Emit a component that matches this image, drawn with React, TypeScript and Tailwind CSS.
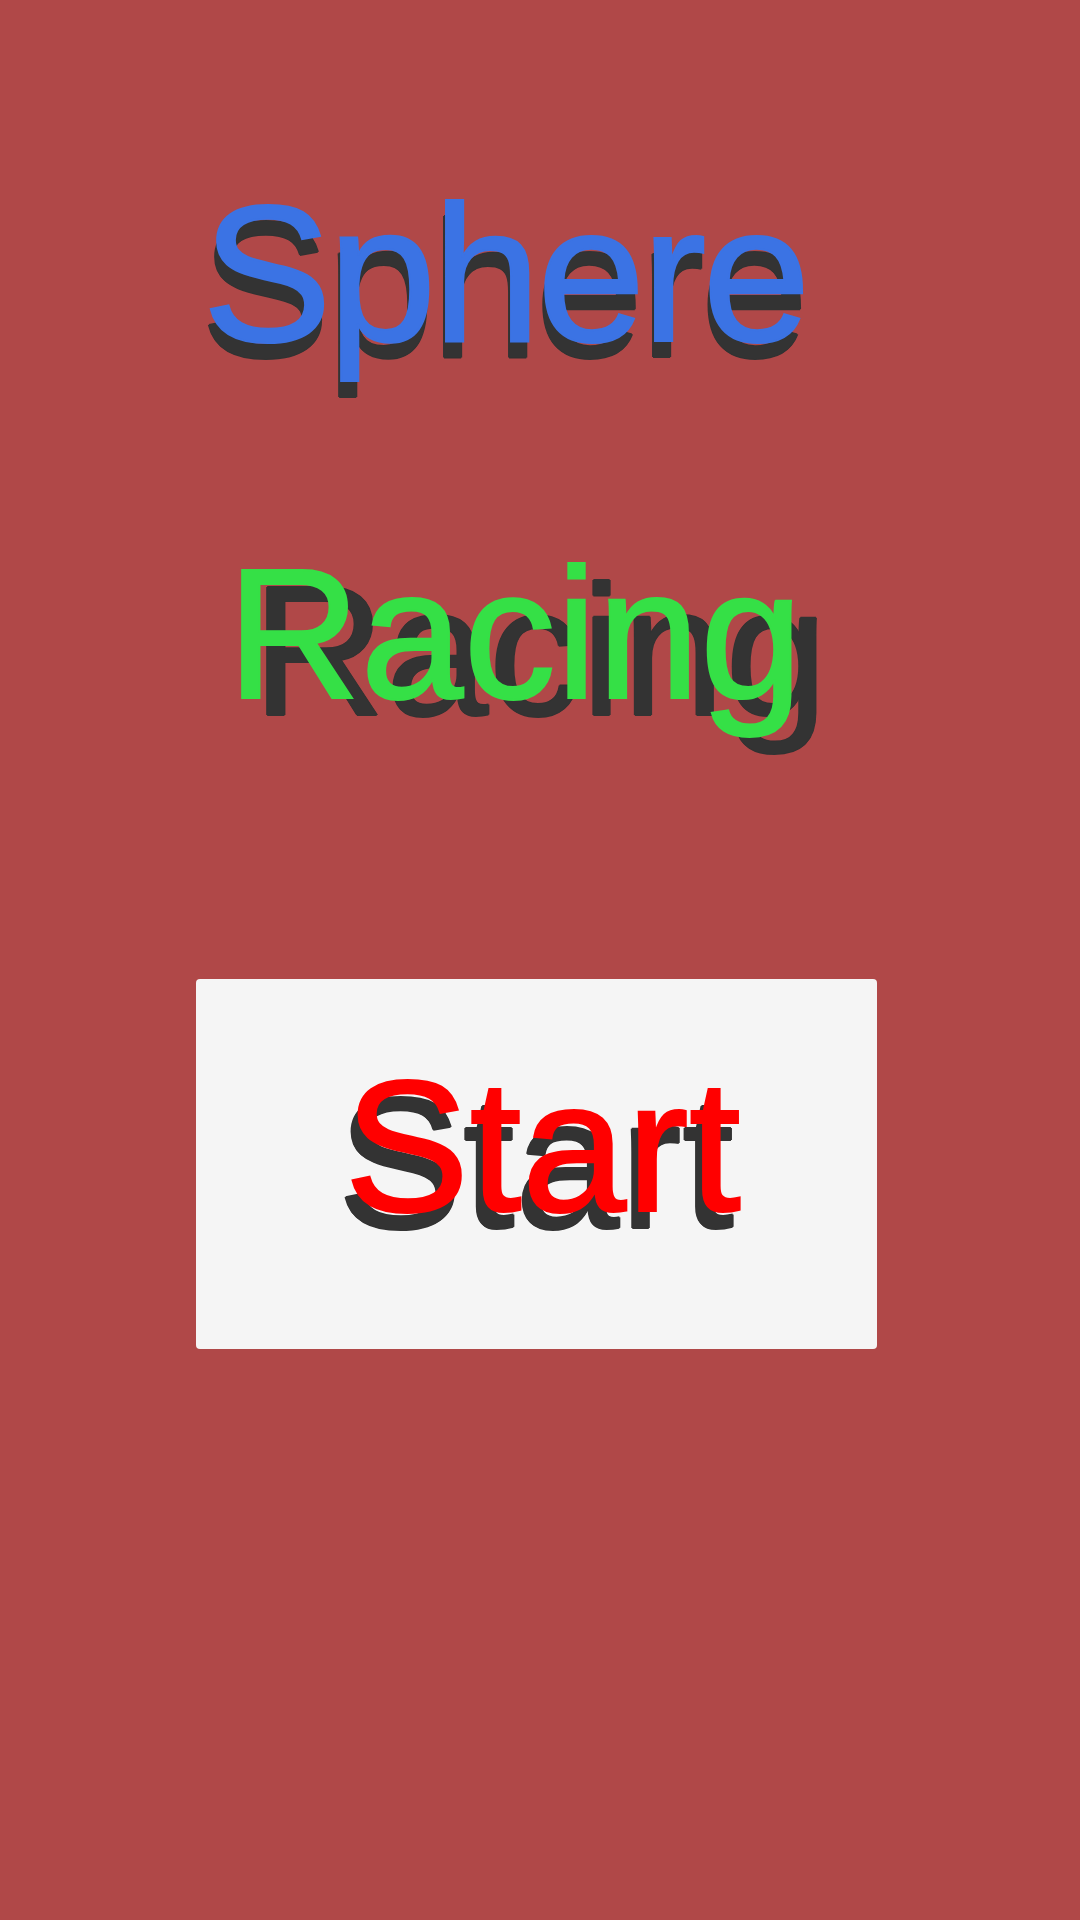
export default function App() {
  return (
    <div className="w-[1080px] h-[1920px] bg-[#b04848] font-['Liberation_Sans',Arial,sans-serif] overflow-hidden">
      <div className="pt-[176px] pl-[202px] text-[195px] leading-none tracking-[-4px] whitespace-nowrap text-[#3b73e4] [-webkit-text-stroke:2px_#3b73e4] [text-shadow:-2px_16px_0_#333333,-1px_16px_0_#333333,-3px_16px_0_#333333,-2px_15px_0_#333333,-2px_17px_0_#333333]">
        Sphere
      </div>
      <div className="mt-[171px] pl-[227px] text-[185px] leading-none whitespace-nowrap text-[#35e046] [-webkit-text-stroke:2px_#35e046] [text-shadow:25px_17px_0_#333333,24px_17px_0_#333333,26px_17px_0_#333333,25px_16px_0_#333333,25px_18px_0_#333333]">
        Racing
      </div>
      <div className="mt-[252px] ml-[196px] w-[681px] h-[370px] rounded-[4px] bg-[#f5f5f5] pt-[73px] pl-[148px]">
        <div className="text-[188px] leading-none whitespace-nowrap text-[#ff0000] [-webkit-text-stroke:2px_#ff0000] [text-shadow:-7px_17px_0_#333333,-6px_17px_0_#333333,-8px_17px_0_#333333,-7px_16px_0_#333333,-7px_18px_0_#333333]">
          Start
        </div>
      </div>
    </div>
  );
}
